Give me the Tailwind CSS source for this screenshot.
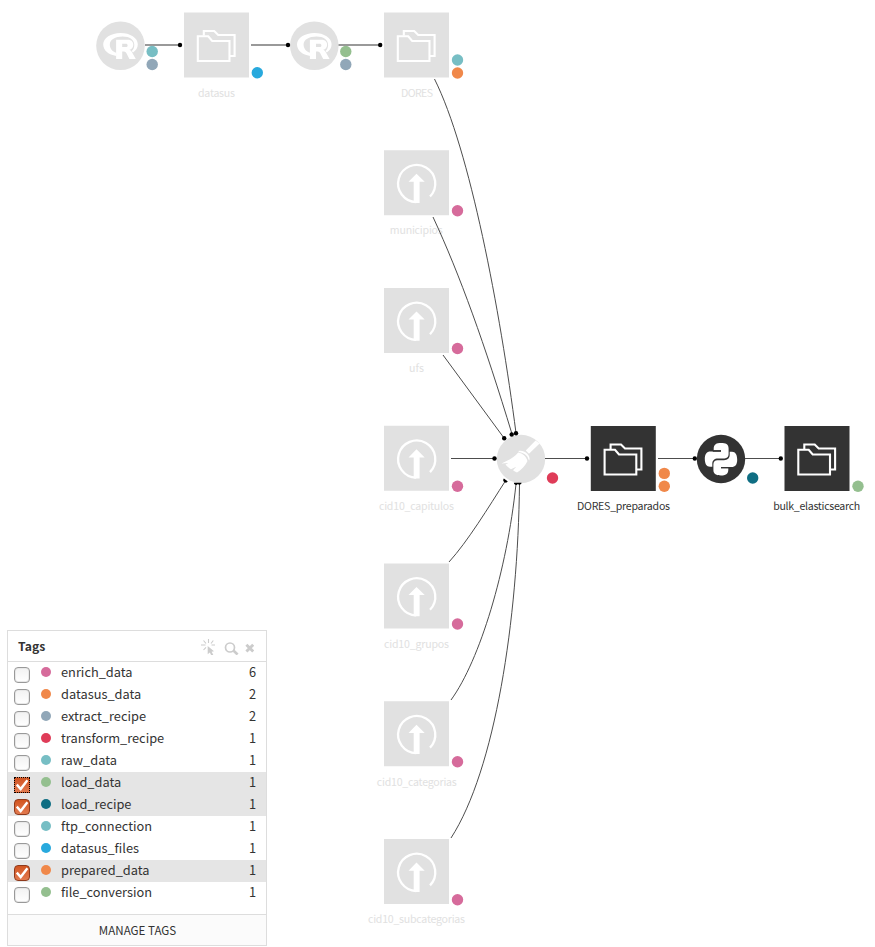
<!DOCTYPE html>
<html lang="en">
<head>
<meta charset="utf-8">
<title>Flow</title>
<script src="https://cdn.jsdelivr.net/npm/@tailwindcss/browser@4"></script>
</head>
<body class="bg-white font-['Noto_Sans_CJK_JP',sans-serif]">
<main class="relative w-[875px] h-[947px] overflow-hidden">
<svg class="block" width="875" height="947" viewBox="0 0 875 947">
  <defs>
    <g id="folders">
      <path d="M0 0H65V65H0Z"/>
      <g fill="none" stroke="#fff" stroke-width="2.1">
        <path d="M19.800 23V18.500H30.200L34.200 22.500H50.600V43.500H46"/>
        <path d="M13.800 23.800H24.200L28.200 28.500H45.500V48.500H13.800Z"/>
      </g>
    </g>
    <g id="upload">
      <path fill="#e1e1e1" d="M0 0H65V65H0Z"/>
      <path d="M46 46.300A18.600 18.600 0 1 0 32.200 51.900" fill="none" stroke="#fff" stroke-width="2.300"/>
      <path d="M32.500 23.500L40.700 31.600H35.600V52.800H29.700V31.600H24.500Z" fill="#fff"/>
    </g>
    <g id="rlang">
      <circle r="24.3" fill="#e1e1e1"/>
      <path fill="#fff" fill-rule="evenodd" d="M0-12.600C9.800-12.600 17.300-7.700 17.300-1.400C17.300 2 15.500 4.800 12.500 6.900L11.200 5.400C12.800 3.800 13.800 1.600 13.800-.8C13.800-6 9.200-9.200 2.200-9.200C-5.200-9.200-10.700-6-10.700-1.200C-10.700 2.800-8.200 5.800-4.200 7V10.300C-11.800 9.300-17.300 4.700-17.300-1.100C-17.300-7.600-9.500-12.600 0-12.600Z"/>
      <path fill="#fff" fill-rule="evenodd" d="M-4.400-6H7.300C11-6 12.800-3.700 12.800-1C12.800 1.700 11.400 3.500 8.900 4.100C10.200 4.600 10.900 5.400 11.500 6.500L15.300 13.300H8.900L5.800 7.300C5 5.900 4.300 5.700 1.700 5.700V13.300H-4.400ZM1.700-1.900V1.400H5.200C6.500 1.400 7.100.7 7.100-.3C7.100-1.300 6.500-1.900 5.200-1.900Z"/>
    </g>
    <path id="snake" d="M-7.300-10.500C-7.300-15-4.500-16.200 0-16.200C4.600-16.200 7.600-15 7.600-10.800V-5C7.600-2.200 6-.9 3.500-.9H-3C-6.600-.9-8.700 1-8.700 4.500V7.500H-11C-14.500 7.500-16.200 4.500-16.200-.5C-16.200-5.200-14.300-7.800-10.500-7.800H0V-9H-7.300Z"/>
  </defs>

  <!-- Flow items -->
  <use href="#rlang" x="120.500" y="45.700"/>
  <use href="#folders" x="184" y="12.500" fill="#e1e1e1"/>
  <use href="#rlang" x="314.300" y="45.700"/>
  <use href="#folders" x="384" y="12.500" fill="#e1e1e1"/>
  <use href="#upload" x="384" y="150.200"/>
  <use href="#upload" x="384" y="288"/>
  <use href="#upload" x="384" y="425.800"/>
  <use href="#upload" x="384" y="563.500"/>
  <use href="#upload" x="384" y="701.300"/>
  <use href="#upload" x="384" y="839.100"/>
  <use href="#folders" x="590.800" y="426" fill="#333"/>
  <use href="#folders" x="784.500" y="426" fill="#333"/>
  <circle cx="521" cy="459" r="24.200" fill="#e1e1e1"/>
  <g fill="#fff">
    <path d="M535.600 440.600L539.600 443.400L529 453.800L525.800 450.500Z"/>
    <path d="M518.400 451C521.300 450.300 524.300 450.900 527 453.400C529.300 455.700 530 458.200 529.300 460.400L528.400 459.300C528 456.300 525.100 453 518.900 452Z"/>
    <path d="M518.200 452.600C522.700 453.300 526.800 457 527.400 461.300C525.300 465.800 521.500 469.600 517 472.600C515.600 472 514.200 471.200 513 470.200L516.300 466.700L511 469.200C508.400 467.900 506.700 466.200 505.500 464.600L508.400 463L501.500 463.400C508.500 460.600 513.600 457.800 518.200 452.600Z"/>
  </g>
  <circle cx="721" cy="459" r="24.200" fill="#333"/>
  <g transform="translate(721 459.300)" fill="#fff">
    <use href="#snake"/>
    <use href="#snake" transform="rotate(180)"/>
    <path d="M-8.200-8.300H0M0 8.300H8.200" stroke="#333" stroke-width="1.400"/>
  </g>

  <!-- Labels -->
  <g font-size="10.600" text-anchor="middle" fill="#e1e1e1">
    <text x="216.500" y="97" textLength="37">datasus</text>
    <text x="417" y="97" textLength="32">DORES</text>
    <text x="416.300" y="234" textLength="53">municipios</text>
    <text x="416.500" y="372" textLength="15">ufs</text>
    <text x="416.500" y="510" textLength="75">cid10_capitulos</text>
    <text x="416.500" y="648" textLength="65">cid10_grupos</text>
    <text x="416.800" y="786" textLength="80">cid10_categorias</text>
    <text x="416.500" y="923" textLength="97">cid10_subcategorias</text>
    <g fill="#333">
      <text x="623.500" y="510" textLength="93">DORES_preparados</text>
      <text x="816.700" y="510" textLength="87">bulk_elasticsearch</text>
    </g>
  </g>

  <!-- Connections -->
  <g fill="none" stroke="#4d4d4d">
    <path d="M145 45H180M251 45H288M338.500 45H380" stroke="#999" stroke-width="1.800"/>
    <path d="M434.500 79C470 150 500 310 516 433"/>
    <path d="M433 217C460 275 485 345 512 434"/>
    <path d="M443 355L504 438"/>
    <path d="M451 458.500H494M545 458.500H587M658 458.500H694M745 458.500H781"/>
    <path d="M449 562C468 541 488 508 506 480"/>
    <path d="M451 700C480 660 507 570 516 484"/>
    <path d="M451 838C495 770 518 620 519.500 484"/>
  </g>
  <g fill="#000">
    <circle cx="180" cy="45" r="2.200"/><circle cx="288" cy="45" r="2.200"/><circle cx="380.200" cy="45" r="2.200"/>
    <circle cx="516" cy="433.200" r="2.200"/><circle cx="511.700" cy="434.500" r="2.200"/><circle cx="504.200" cy="438.300" r="2.200"/>
    <circle cx="494.500" cy="458.500" r="2.200"/>
    <path d="M503.900 478.500L507.800 481.600A2.200 2.200 0 1 1 503.900 478.500ZM513.800 482.800H521.600A2.200 2.200 0 0 1 517.800 484A2.200 2.200 0 0 1 513.800 482.800Z"/>
    <circle cx="587" cy="458.500" r="2.200"/><circle cx="694.800" cy="458.500" r="2.200"/><circle cx="780.800" cy="458.500" r="2.200"/>
  </g>

  <!-- Tag markers -->
  <g fill="#77bec4"><circle cx="152.200" cy="51.500" r="5.700"/><circle cx="457.500" cy="60" r="5.700"/></g>
  <g fill="#91a7b8"><circle cx="152.200" cy="64.500" r="5.700"/><circle cx="345.800" cy="64.500" r="5.700"/></g>
  <g fill="#94bf8f"><circle cx="345.800" cy="51.500" r="5.700"/><circle cx="858" cy="486.300" r="5.700"/></g>
  <g fill="#f0884a"><circle cx="457.500" cy="73" r="5.700"/><circle cx="664.300" cy="473.400" r="5.700"/><circle cx="664.300" cy="486.300" r="5.700"/></g>
  <g fill="#d66b9b"><circle cx="457.500" cy="210.700" r="5.700"/><circle cx="457.500" cy="348.500" r="5.700"/><circle cx="457.500" cy="486.300" r="5.700"/><circle cx="457.500" cy="624" r="5.700"/><circle cx="457.500" cy="761.800" r="5.700"/><circle cx="457.500" cy="899.700" r="5.700"/></g>
  <circle cx="257.300" cy="72.800" r="5.700" fill="#28a9dd"/>
  <circle cx="552.500" cy="478" r="5.700" fill="#df3c58"/>
  <circle cx="752.700" cy="478" r="5.700" fill="#0f6e83"/>
</svg>

<section class="absolute left-[7px] top-[630px] w-[260px] h-[316px] border border-[#ddd] bg-white text-[#333] text-[12.8px] flex flex-col">
  <header class="h-[31px] shrink-0 border-b border-[#ddd] flex items-center pl-[10px] pr-3">
    <h2 class="font-bold text-[12.2px] leading-[30px] grow">Tags</h2>
    <svg width="54" height="18" viewBox="200 637.500 54 18" class="shrink-0" fill="none" stroke="#ccc">
      <path stroke-width="1.100" d="M208.500 639.500V643.500M203.500 641L206 644M213.300 641L211 644M201 645.500H205.500M211.500 645.500H215M203.500 650.500L206 647.800"/>
      <path fill="#ccc" stroke="none" d="M207.700 646.500L214 651.700L211.600 652.200L213.300 655.200L211.400 656L209.800 653L207.700 654.700Z"/>
      <circle cx="230" cy="648" r="4.500" stroke-width="1.700"/>
      <path stroke-width="2.600" d="M233.600 651.200L237.600 655"/>
      <path stroke-width="2.900" d="M246.400 645.200L253.200 652M253.200 645.200L246.400 652"/>
    </svg>
  </header>
  <ul id="tags" class="pb-[10px]"></ul>
  <footer class="grow border-t border-[#ddd] bg-[#fbfbfb] flex justify-center items-center pt-[2px] pl-px">
    <button class="text-[11.6px] leading-none whitespace-nowrap">MANAGE TAGS</button>
  </footer>
</section>
</main>
<script>
const tags = [
  ['enrich_data','#d66b9b',6,0],['datasus_data','#f0884a',2,0],['extract_recipe','#91a7b8',2,0],
  ['transform_recipe','#df3c58',1,0],['raw_data','#77bec4',1,0],['load_data','#94bf8f',1,2],
  ['load_recipe','#0f6e83',1,1],['ftp_connection','#77bec4',1,0],['datasus_files','#28a9dd',1,0],
  ['prepared_data','#f0884a',1,1],['file_conversion','#94bf8f',1,0]
];
const empty = '<span class="block size-4 mt-[5px] rounded-[4px] border border-[#999] bg-linear-to-b from-[#f2f2f2] to-white shadow-[inset_0_0_0_1px_#e8e8e8]"></span>';
const check = '<svg class="absolute inset-0" width="16" height="16" viewBox="0 0 16 16"><path d="M2.800 7.600L6.700 12L13.400 3.200" fill="none" stroke="#fff" stroke-width="2.400"/></svg>';
const checked = '<span class="relative block size-4 mt-[5px] rounded-[4px] border border-[#8f3a1c] bg-linear-to-b from-[#d2551f] to-[#e27a4f]"><span class="absolute -inset-px">' + check + '</span></span>';
const focused = '<span class="relative block size-4 mt-[5px] border border-dotted border-black bg-linear-to-b from-[#cf5220] to-[#e27a4f]"><span class="absolute -inset-px">' + check + '</span></span>';
document.getElementById('tags').innerHTML = tags.map(([name, color, count, state]) =>
  '<li class="h-[22px] flex pl-[6px] pr-[10px] ' + (state ? 'bg-[#e5e5e5]' : '') + '">' +
  [empty, checked, focused][state] +
  '<span class="size-[10px] rounded-full ml-[11px] mt-[5px]" style="background:' + color + '"></span>' +
  '<span class="ml-[10px] grow leading-[20px]">' + name + '</span>' +
  '<span class="leading-[20px]">' + count + '</span></li>').join('');
</script>
</body>
</html>
